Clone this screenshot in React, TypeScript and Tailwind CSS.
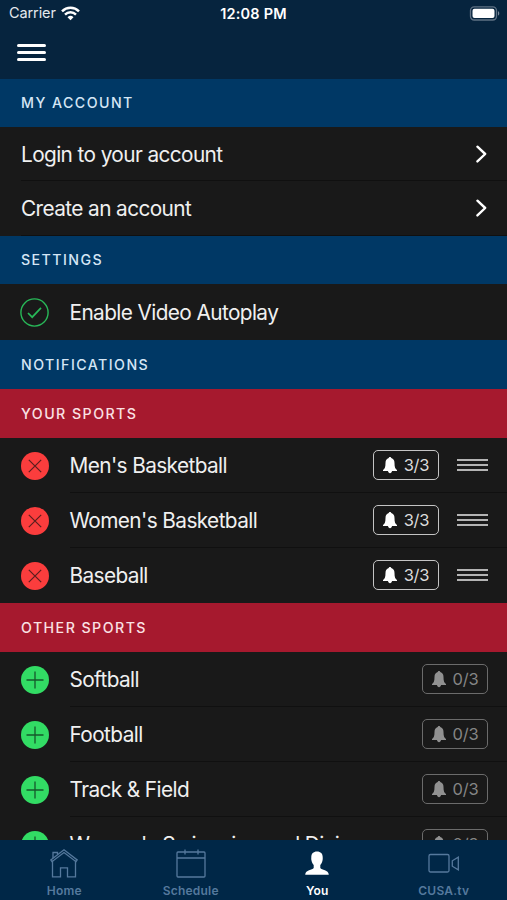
import React from "react";

function SectionHeader({ title, className }: { title: string; className: string }) {
  return (
    <div className={`flex shrink-0 items-center pl-[21px] text-[14.2px] font-medium leading-none tracking-[1.45px] ${className}`}>
      {title}
    </div>
  );
}

function LinkRow({ label, className }: { label: string; className: string }) {
  return (
    <div className={`flex shrink-0 pl-[21px] ${className}`}>
      <div className="flex flex-1 items-center justify-between border-b border-[#101010] pr-[19px]">
        <span className="pt-[3px] text-[20.8px] leading-none tracking-[-0.6px] text-[#f0f0f0]">{label}</span>
        <svg width="14" height="20" viewBox="0 0 14 20" fill="none" stroke="#fff" strokeWidth="2.4" strokeLinecap="round" strokeLinejoin="round">
          <path d="M3.4 2.7 11.2 10l-7.8 7.4" />
        </svg>
      </div>
    </div>
  );
}

function Bell() {
  return (
    <svg width="14" height="17" viewBox="0 0 14 17" fill="currentColor">
      <path d="M7 0c.7 0 1.2.5 1.3 1.1 2 .6 3.2 2.3 3.2 4.8 0 4.2.8 5.800 2.500 7.100v1.100H9c-.2 1.300-1 2.200-2 2.200s-1.800-.9-2-2.200H0V13c1.700-1.300 2.500-2.900 2.500-7.100 0-2.500 1.200-4.200 3.200-4.800C5.800.5 6.300 0 7 0Z" />
    </svg>
  );
}

function SportRow({ name, added, last, className }: { name: string; added: boolean; last?: boolean; className: string }) {
  return (
    <div className={`flex shrink-0 items-stretch pl-[21px] ${className}`}>
      <div className="flex w-[49px] items-center">
        <svg width="28" height="28" viewBox="0 0 28 28" fill="none">
          <circle cx="14" cy="14" r="14" fill={added ? "#fb3d3d" : "#32dc64"} />
          {added ? (
            <path d="M7.800 7.800l12.400 12.400M20.200 7.800L7.800 20.200" stroke="#5a1e1e" strokeWidth="1.2" />
          ) : (
            <path d="M14 5.500v17M5.500 14h17" stroke="#16582b" strokeWidth="1.3" />
          )}
        </svg>
      </div>
      <div className={`flex flex-1 items-center border-b ${last ? "border-transparent" : "border-[#101010]"}`}>
        <span className="-ml-[0.5px] flex-1 whitespace-nowrap pt-[3px] text-[20.8px] leading-none tracking-[-0.6px] text-[#f0f0f0]">{name}</span>
        <div
          className={`flex h-[30px] w-[66px] items-center justify-center gap-[7px] rounded-[5px] border-[1.5px] ${
            added ? "mr-[18px] border-[#c4c4c4] text-white" : "mr-[19px] border-[#6b6b6b] text-[#919191]"
          }`}
        >
          <Bell />
          <span className={`text-[16.500px] leading-none tracking-[-0.2px] ${added ? "text-[#dcdcdc]" : "text-[#858585]"}`}>
            {added ? "3/3" : "0/3"}
          </span>
        </div>
        {added && (
          <div className="mr-[19px] flex w-[31px] flex-col gap-[3px]">
            <div className="h-[2px] bg-[#b4b4b4]" />
            <div className="h-[2px] bg-[#b4b4b4]" />
            <div className="h-[2px] bg-[#b4b4b4]" />
          </div>
        )}
      </div>
    </div>
  );
}

function Tab({ label, active, children }: { label: string; active?: boolean; children: React.ReactNode }) {
  return (
    <div className={`flex flex-1 flex-col items-center ${active ? "text-white" : "text-[#55799d]"}`}>
      <div className="h-[44px]">{children}</div>
      <span className="text-[12px] font-semibold leading-[14px] tracking-[0.2px]">{label}</span>
    </div>
  );
}

export default function App() {
  return (
    <div className="flex h-[900px] w-[507px] flex-col overflow-hidden bg-[#191919] font-['Inter','Liberation_Sans',sans-serif]">
      <header className="h-[79px] shrink-0 bg-[#06243e]">
        <div className="grid h-[27px] grid-cols-3 items-center pl-[9px] pr-[7px] text-white">
          <div className="flex items-center gap-[5px]">
            <span className="text-[14.500px] leading-none tracking-[-0.1px] text-[#e4e9ee]">Carrier</span>
            <svg width="19" height="15" viewBox="0 0 19 15" fill="none" stroke="#fff" strokeWidth="2.500">
              <path d="M1 5.300a12.200 12.200 0 0 1 17 0" />
              <path d="M4 8.600a7.900 7.900 0 0 1 11 0" />
              <path d="M9.500 14.300 6.500 11.200a4.300 4.300 0 0 1 6 0Z" fill="#fff" stroke="none" />
            </svg>
          </div>
          <span className="-ml-[2px] pt-px text-center text-[14.500px] font-semibold leading-none tracking-[0.200px]">12:08 PM</span>
          <svg className="justify-self-end" width="31" height="15" viewBox="0 0 31 15" fill="none">
            <rect x="1.500" y=".8" width="26" height="13.200" rx="3.700" stroke="#5f7184" strokeWidth="1.300" />
            <rect x="3.500" y="2.800" width="22" height="9.200" rx="2" fill="#fff" />
            <path d="M29 5.200c1.700.6 1.700 3.800 0 4.400Z" fill="#7a8999" />
          </svg>
        </div>
        <div className="ml-[17px] mt-[17px] flex w-[29px] flex-col gap-[4.500px]">
          <div className="h-[2.500px] rounded-sm bg-white" />
          <div className="h-[2.500px] rounded-sm bg-white" />
          <div className="h-[2.500px] rounded-sm bg-white" />
        </div>
      </header>

      <main className="flex min-h-0 flex-1 flex-col overflow-hidden">
        <SectionHeader title="MY ACCOUNT" className="h-[48px] bg-[#003865] text-[#d5e6f5]" />
        <LinkRow label="Login to your account" className="h-[54px]" />
        <LinkRow label="Create an account" className="h-[55px]" />
        <SectionHeader title="SETTINGS" className="h-[48px] bg-[#003865] pt-px text-[#d5e6f5]" />
        <div className="flex h-[56px] shrink-0 items-center pl-[20px]">
          <svg className="mr-[20.500px]" width="29" height="29" viewBox="0 0 29 29" fill="none" stroke="#28b858">
            <circle cx="14.500" cy="14.500" r="13.600" strokeWidth="1.400" />
            <path d="M8 15l4.200 4.200L21 9.800" strokeWidth="1.700" />
          </svg>
          <span className="pt-[2px] text-[20.800px] leading-none tracking-[-0.600px] text-[#f0f0f0]">Enable Video Autoplay</span>
        </div>
        <SectionHeader title="NOTIFICATIONS" className="h-[49px] bg-[#003865] pt-[2px] text-[#d5e6f5]" />
        <SectionHeader title="YOUR SPORTS" className="h-[49px] bg-[#a6192e] pt-[2px] text-[#fae1e4]" />
        <SportRow name="Men's Basketball" added className="h-[55px]" />
        <SportRow name="Women's Basketball" added className="h-[55px]" />
        <SportRow name="Baseball" added last className="h-[55px]" />
        <SectionHeader title="OTHER SPORTS" className="h-[49px] bg-[#a6192e] pt-[2px] text-[#fae1e4]" />
        <SportRow name="Softball" added={false} className="h-[55px]" />
        <SportRow name="Football" added={false} className="h-[55px]" />
        <SportRow name="Track & Field" added={false} className="h-[55px]" />
        <SportRow name="Women's Swimming and Diving" added={false} className="h-[55px]" />
      </main>

      <nav className="flex h-[60px] shrink-0 bg-[#002747] pl-px">
        <Tab label="Home">
          <svg width="30" height="44" viewBox="0 0 30 44" fill="none" stroke="currentColor" strokeWidth="1.300">
            <path d="M3.500 20.500v16.300h8v-9h7v9h8V20.500" />
            <path d="M1.800 20 15 9.800 28.200 20l-1.200 1.700L15 12.600 3 21.700 1.800 20Z" />
            <path d="M4 18v-5.500h4.500v2" />
          </svg>
        </Tab>
        <Tab label="Schedule">
          <svg width="30" height="44" viewBox="0 0 30 44" fill="none" stroke="currentColor" strokeWidth="1.300">
            <rect x="1" y="12" width="28" height="25" rx="1" />
            <path d="M1 18h28M9 9.500v5M22 9.500v5" />
          </svg>
        </Tab>
        <Tab label="You" active>
          <svg width="24" height="44" viewBox="0 0 24 44" fill="currentColor">
            <path d="M12 11.500c3.700 0 5.700 2.200 5.700 5.600 0 1.200.2 2-.2 3.400-.4 2-1.400 3.600-2.200 4.600v3c1.300 2.300 8.200 1.600 8.500 6.600H.2c.3-5 7.200-4.300 8.500-6.600v-3c-.8-1-1.800-2.600-2.200-4.600-.4-1.400-.2-2.200-.2-3.400 0-3.400 2-5.600 5.700-5.600Z" />
          </svg>
        </Tab>
        <Tab label="CUSA.tv">
          <svg width="32" height="44" viewBox="0 0 32 44" fill="none" stroke="currentColor" strokeWidth="1.300">
            <rect x="1" y="14.500" width="20" height="17.500" rx="1.500" />
            <path d="M30.300 17.200v12.600l-6-3.600v-5.400l6-3.600Z" />
          </svg>
        </Tab>
      </nav>
    </div>
  );
}
